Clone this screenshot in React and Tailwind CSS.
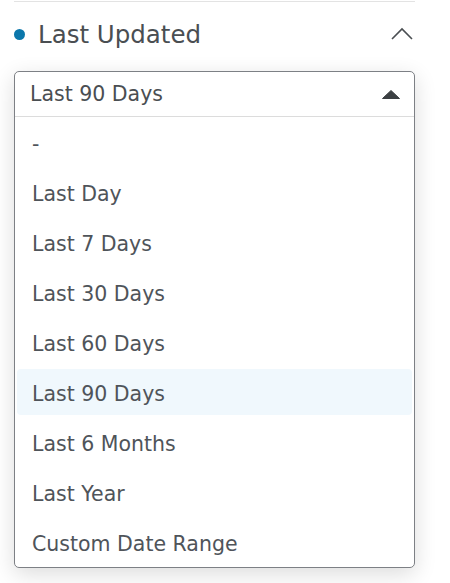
export default function App() {
  const options = [
    "-",
    "Last Day",
    "Last 7 Days",
    "Last 30 Days",
    "Last 60 Days",
    "Last 90 Days",
    "Last 6 Months",
    "Last Year",
    "Custom Date Range",
  ];
  return (
    <div
      className="w-[450px] h-[583px] bg-white overflow-hidden"
      style={{ fontFamily: '"DejaVu Sans", sans-serif' }}
    >
      <div className="ml-[14px] w-[401px] pt-px">
        <div className="h-px bg-[#e3e3e3]" />
        <div className="h-[64px] flex items-center justify-between">
          <div className="flex items-center">
            <span className="w-[11px] h-[11px] rounded-full bg-[#0b77ab]" />
            <span className="ml-[13px] mt-[2px] text-[24.5px] leading-none text-[#4a4e52]">
              Last Updated
            </span>
          </div>
          <svg width="22" height="14" viewBox="0 0 22 14" className="mr-[2px]">
            <polyline
              points="1,12 11,2 21,12"
              fill="none"
              stroke="#4a4e52"
              strokeWidth="1.6"
            />
          </svg>
        </div>
        <div className="mt-[5px] border border-[#7d8085] rounded-[5px] bg-white shadow-[0_6px_22px_rgba(0,0,0,0.14)] overflow-hidden">
          <div className="h-[45px] flex items-center justify-between pl-[15px] pr-[14px] border-b border-[#dcdcdc]">
            <span className="text-[20.5px] leading-none text-[#4a4e52] mt-px">Last 90 Days</span>
            <svg width="18" height="9" viewBox="0 0 18 9">
              <path d="M9 0.5 L17.5 8.5 L0.5 8.5 Z" fill="#3c4043" strokeLinejoin="round" stroke="#3c4043" strokeWidth="1" />
            </svg>
          </div>
          <div className="flex flex-col">
            {options.map((o) => (
              <div key={o} className="h-[50px] flex items-stretch py-[2px] px-[2px]">
                <div
                  className={
                    "flex-1 flex items-center pl-[15px] pt-[4px] rounded-[4px] text-[20.5px] leading-none text-[#4f545a] " +
                    (o === "Last 90 Days" ? "bg-[#f0f8fd]" : "")
                  }
                >
                  {o}
                </div>
              </div>
            ))}
          </div>
        </div>
      </div>
    </div>
  );
}
